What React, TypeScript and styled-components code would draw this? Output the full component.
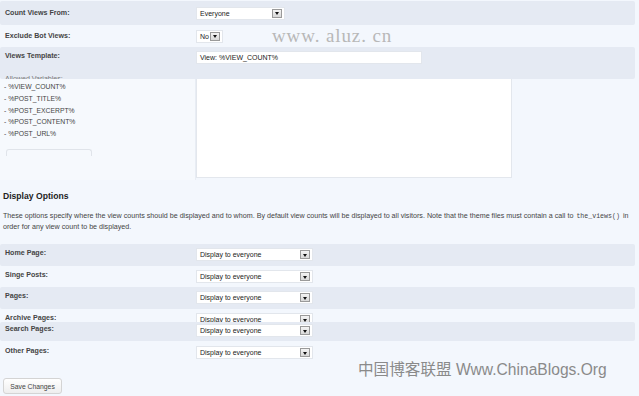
import React from "react";
import styled, { createGlobalStyle } from "styled-components";

const Global = createGlobalStyle`
  html, body { margin: 0; padding: 0; background: #f3f7fd; }
  body { font-family: "Liberation Sans", Arial, sans-serif; color: #333; }
`;

const Page = styled.div`
  position: relative;
  width: 639px;
  height: 396px;
  overflow: hidden;
  padding-top: 1px;
  box-sizing: border-box;
`;

const Row = styled.div<{ $shaded?: boolean; $h: number; $pad?: number }>`
  display: grid;
  grid-template-columns: 196px 1fr;
  align-items: start;
  width: 635px;
  height: ${(p) => p.$h}px;
  padding-top: ${(p) => p.$pad ?? 4}px;
  box-sizing: border-box;
  overflow: hidden;
  background: ${(p) => (p.$shaded ? "#e5eaf3" : "transparent")};
  border-radius: 2px;
`;

const CenterRow = styled(Row)`
  align-items: center;
  padding-top: 0;
`;

const Label = styled.div`
  padding-left: 5px;
  font-size: 7.1px;
  font-weight: bold;
  color: #444;
  line-height: 11px;
  white-space: nowrap;
`;

const LabelStack = styled.div`
  display: flex;
  flex-direction: column;
  gap: 12px;
`;

const FaintLabel = styled(Label)`
  font-weight: normal;
  color: #777;
`;

const SelectBox = styled.div<{ $w: number }>`
  display: flex;
  align-items: center;
  justify-content: space-between;
  width: ${(p) => p.$w}px;
  height: 13px;
  box-sizing: border-box;
  background: #fff;
  border: 1px solid #e2e6ec;
  padding: 0 2px 0 3px;
  font-size: 7px;
  color: #222;
`;

const Arrow = styled.span`
  display: inline-flex;
  align-items: center;
  justify-content: center;
  width: 10px;
  height: 9px;
  box-sizing: border-box;
  border: 1px solid #9a9a9a;
  background: linear-gradient(#f4f4f4, #d8d8d8);
  &::after {
    content: "";
    border-left: 2.5px solid transparent;
    border-right: 2.5px solid transparent;
    border-top: 3px solid #111;
    margin-top: 1px;
  }
`;

const TextInput = styled.div`
  width: 226px;
  height: 13px;
  box-sizing: border-box;
  background: #fff;
  border: 1px solid #e2e6ec;
  padding-left: 3px;
  font-size: 7px;
  line-height: 11px;
  color: #222;
`;

const Panel = styled.div`
  display: grid;
  grid-template-columns: 196px 1fr;
  height: 101px;
`;

const VarList = styled.div`
  display: flex;
  flex-direction: column;
  padding: 2px 0 0 4px;
  background: #f6f9fd;
  border-right: 1px solid #e8edf4;
  font-size: 6.8px;
  line-height: 11.8px;
  color: #444;
`;

const GhostButton = styled.div`
  margin: 9px 0 0 2px;
  width: 84px;
  height: 6px;
  border: 1px solid #e0e4ea;
  border-bottom: none;
  border-radius: 3px 3px 0 0;
`;

const TextArea = styled.div`
  width: 316px;
  height: 99px;
  background: #fff;
  border: 1px solid #e3e7ed;
  border-top: none;
  box-sizing: border-box;
`;

const Heading = styled.h3`
  margin: 11px 0 0 3px;
  font-size: 8.6px;
  font-weight: bold;
  color: #222;
  line-height: 11px;
`;

const Desc = styled.p`
  margin: 9px 0 12px 3px;
  width: 632px;
  font-size: 7.15px;
  line-height: 10px;
  color: #444;
`;

const Code = styled.code`
  font-family: "Liberation Mono", "Courier New", monospace;
  font-size: 6.6px;
  margin: 0 3px;
`;

const SaveButton = styled.button`
  margin: 15px 0 0 3px;
  width: 59px;
  height: 16px;
  padding: 0;
  border: 1px solid #d4d4d4;
  border-radius: 3px;
  background: linear-gradient(#ffffff, #eeeeee);
  font-family: "Liberation Sans", Arial, sans-serif;
  font-size: 6.8px;
  color: #444;
`;

const Watermark = styled.div`
  position: absolute;
  left: 272px;
  top: 25px;
  font-family: "Liberation Serif", "Times New Roman", serif;
  font-size: 19px;
  letter-spacing: 0.9px;
  color: #b8b8b8;
  white-space: pre;
`;

const CnMark = styled.div`
  position: absolute;
  left: 358px;
  top: 357px;
  font-family: "Liberation Sans", "Noto Sans CJK SC", sans-serif;
  font-size: 15.6px;
  color: #8a8a8a;
  white-space: nowrap;
`;

const Select = ({ w, value }: { w: number; value: string }) => (
  <SelectBox $w={w}>
    <span>{value}</span>
    <Arrow />
  </SelectBox>
);

const displayRows: { label: string; h: number; pad?: number; shaded?: boolean }[] = [
  { label: "Home Page:", h: 22, shaded: true },
  { label: "Singe Posts:", h: 21 },
  { label: "Pages:", h: 22, shaded: true },
  { label: "Archive Pages:", h: 13 },
  { label: "Search Pages:", h: 19, pad: 2, shaded: true },
  { label: "Other Pages:", h: 22, pad: 5 },
];

export default function App() {
  return (
    <>
      <Global />
      <Page>
        <CenterRow $shaded $h={24}>
          <Label>Count Views From:</Label>
          <Select w={89} value="Everyone" />
        </CenterRow>
        <CenterRow $h={22}>
          <Label>Exclude Bot Views:</Label>
          <Select w={27} value="No" />
        </CenterRow>
        <Row $shaded $h={32}>
          <LabelStack>
            <Label>Views Template:</Label>
            <FaintLabel>Allowed Variables:</FaintLabel>
          </LabelStack>
          <TextInput>View: %VIEW_COUNT%</TextInput>
        </Row>
        <Panel>
          <VarList>
            <span>- %VIEW_COUNT%</span>
            <span>- %POST_TITLE%</span>
            <span>- %POST_EXCERPT%</span>
            <span>- %POST_CONTENT%</span>
            <span>- %POST_URL%</span>
            <GhostButton />
          </VarList>
          <TextArea />
        </Panel>
        <Heading>Display Options</Heading>
        <Desc>
          These options specify where the view counts should be displayed and to whom. By default view counts will be
          displayed to all visitors. Note that the theme files must contain a call to
          <Code>the_views()</Code>
          in order for any view count to be displayed.
        </Desc>
        {displayRows.map((r) => (
          <Row key={r.label} $h={r.h} $pad={r.pad} $shaded={r.shaded}>
            <Label>{r.label}</Label>
            <Select w={117} value="Display to everyone" />
          </Row>
        ))}
        <SaveButton>Save Changes</SaveButton>
        <Watermark>www. aluz. cn</Watermark>
        <CnMark>中国博客联盟 Www.ChinaBlogs.Org</CnMark>
      </Page>
    </>
  );
}
